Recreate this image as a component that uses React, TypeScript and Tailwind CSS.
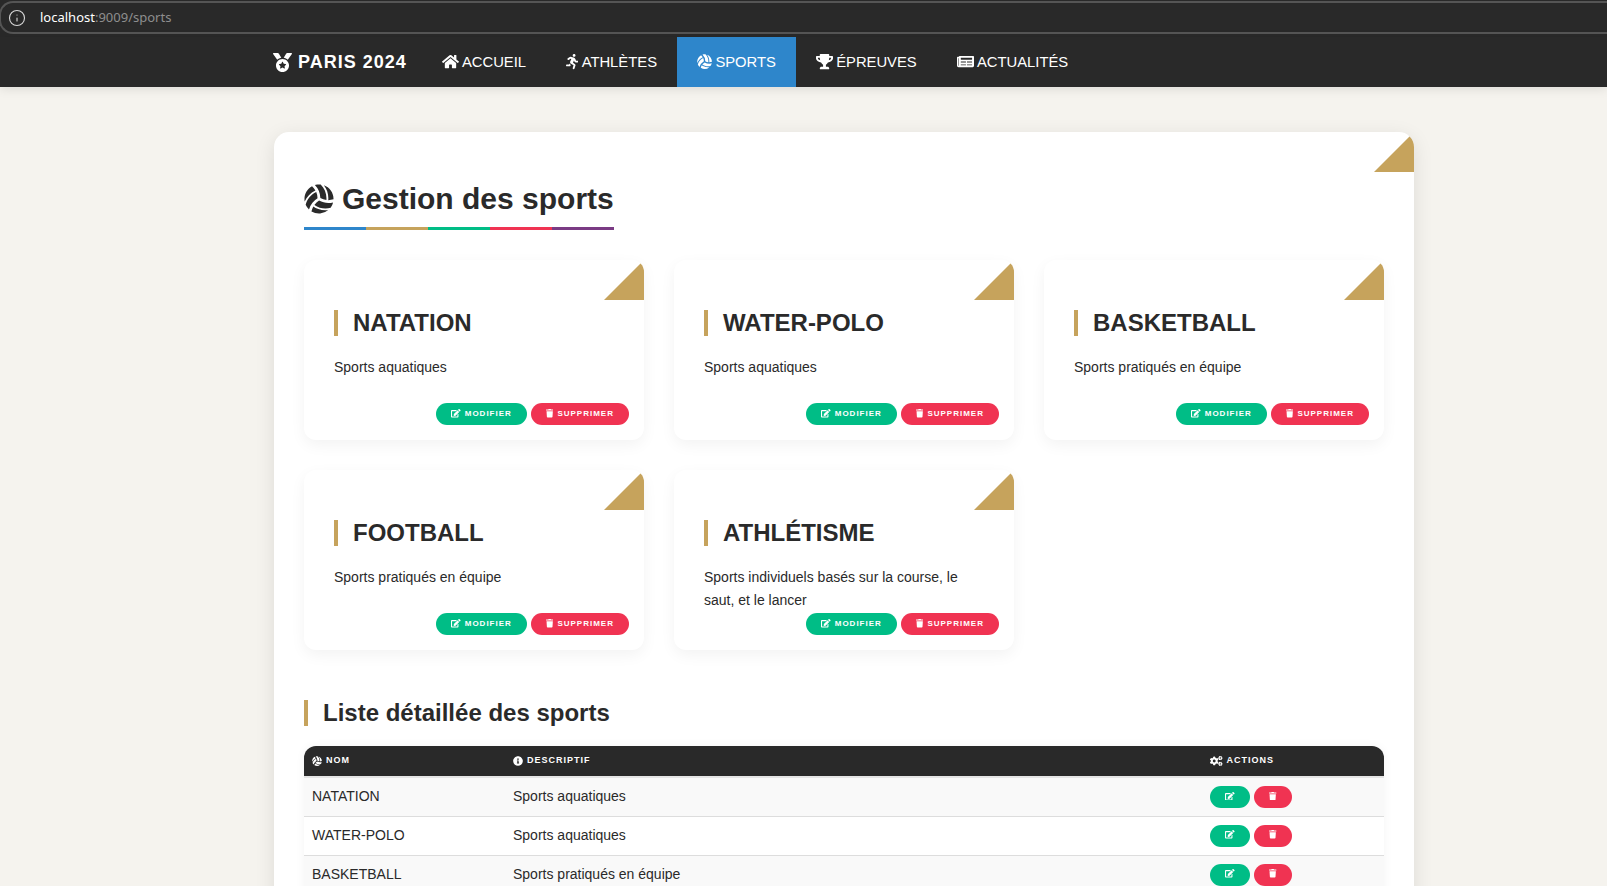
import { Info } from 'lucide-react'
import {
  FaCogs,
  FaEdit,
  FaHome,
  FaInfoCircle,
  FaMedal,
  FaNewspaper,
  FaRunning,
  FaTrash,
  FaTrophy,
  FaVolleyballBall,
} from 'react-icons/fa'

// react-icons draws in a 1em square, so wide glyphs get their real width here
const navItems = [
  { label: 'Accueil', icon: FaHome, iconClass: 'w-[17px]' },
  { label: 'Athlètes', icon: FaRunning, iconClass: 'w-[12.4px]' },
  { label: 'Sports', icon: FaVolleyballBall, iconClass: 'w-[15.2px]', active: true },
  { label: 'Épreuves', icon: FaTrophy, iconClass: 'w-[17px]' },
  { label: 'Actualités', icon: FaNewspaper, iconClass: 'w-[17px]' },
]

const sports = [
  { name: 'Natation', description: 'Sports aquatiques' },
  { name: 'Water-polo', description: 'Sports aquatiques' },
  { name: 'Basketball', description: 'Sports pratiqués en équipe' },
  { name: 'Football', description: 'Sports pratiqués en équipe' },
  { name: 'Athlétisme', description: 'Sports individuels basés sur la course, le saut, et le lancer' },
]

const ruleColours = ['bg-[#2e86cb]', 'bg-[#c6a35c]', 'bg-[#00bd86]', 'bg-[#f03352]', 'bg-[#7a3b84]']

function Corner() {
  return <div className="absolute right-0 top-0 h-10 w-10 bg-[#c6a35c] [clip-path:polygon(100%_0,100%_100%,0_100%)]" />
}

function SportCard({ name, description }: { name: string; description: string }) {
  return (
    <div className="relative flex h-[180px] flex-col overflow-hidden rounded-[12px] bg-white pb-[15px] pl-[30px] pr-[15px] pt-[50px] shadow-[0_5px_15px_rgba(0,0,0,0.05)]">
      <Corner />
      <h3 className="border-l-4 border-[#c6a35c] pl-[15px] text-[24px] font-bold uppercase leading-[26px] text-[#2a2a2a]">
        {name}
      </h3>
      <p className="mt-5 pr-[15px] text-[14px] leading-[23px] text-[#2a2a2a]">{description}</p>
      <div className="mt-auto flex justify-end gap-1">
        <button className="flex h-[22px] w-[91px] items-center justify-center gap-[4px] rounded-full bg-[#00bd86] text-[8px] font-bold uppercase tracking-[1px] text-white">
          <FaEdit className="mb-px h-[8.5px] w-[9.6px]" />
          Modifier
        </button>
        <button className="flex h-[22px] w-[98px] items-center justify-center gap-[4px] rounded-full bg-[#f03352] text-[8px] font-bold uppercase tracking-[1px] text-white">
          <FaTrash className="mb-px h-[8.5px] w-[7.4px]" />
          Supprimer
        </button>
      </div>
    </div>
  )
}

function HeaderCell({ icon: Icon, iconClass, label }: { icon: typeof FaCogs; iconClass: string; label: string }) {
  return (
    <th className="px-2 text-left align-middle text-[9px] font-bold uppercase tracking-[1px] text-white">
      <span className="flex items-center gap-[4px]">
        <Icon className={`h-[10px] ${iconClass}`} />
        {label}
      </span>
    </th>
  )
}

export default function App() {
  return (
    <div className="h-[886px] w-[1607px] overflow-hidden bg-[#f5f3ee] font-['Liberation_Sans',Arial,sans-serif] text-[#2a2a2a]">
      <div className="h-[37px] bg-[#292929] pt-px">
        <div className="-ml-px flex h-[33px] items-center rounded-l-[14px] border-y-2 border-l-2 border-[#555555] pl-[7px]">
          <Info className="h-[18px] w-[18px] text-[#d8d8d8]" strokeWidth={1.5} />
          <span className="ml-[14px] font-['Noto_Sans',sans-serif] text-[13px] text-[#8e8e8e]">
            <span className="text-white">localhost</span>:9009/sports
          </span>
        </div>
      </div>

      <nav className="relative z-10 flex h-[50px] bg-[#292929] pl-[273px] text-[14.8px] text-white shadow-[0_2px_10px_rgba(0,0,0,0.1)]">
        <a className="mr-[15px] flex items-center gap-[6px] text-[18px] font-bold tracking-[1px]">
          <FaMedal className="text-[19px]" />
          PARIS 2024
        </a>
        {navItems.map(({ label, icon: Icon, iconClass, active }) => (
          <a
            key={label}
            className={`flex items-center gap-[3.2px] px-5 uppercase ${active ? 'bg-[#2e86cb]' : ''}`}
          >
            <Icon className={`h-[15.2px] ${iconClass}`} />
            {label}
          </a>
        ))}
      </nav>

      <main className="relative ml-[274px] mt-[45px] w-[1140px] overflow-hidden rounded-t-[15px] bg-white p-[30px] shadow-[0_5px_20px_rgba(0,0,0,0.1)]">
        <Corner />
        <h1 className="mt-[13px] flex h-12 items-center gap-2 text-[30px] font-bold leading-[48px] text-[#2a2a2a]">
          <FaVolleyballBall className="text-[30px]" />
          Gestion des sports
        </h1>
        <div className="mt-1 flex h-[3px] w-[310px]">
          {ruleColours.map((colour) => (
            <div key={colour} className={`flex-1 ${colour}`} />
          ))}
        </div>

        <div className="mt-[30px] grid grid-cols-3 gap-[30px]">
          {sports.map((sport) => (
            <SportCard key={sport.name} {...sport} />
          ))}
        </div>

        <h2 className="mt-[50px] border-l-4 border-[#c6a35c] pl-[15px] text-[24px] font-bold leading-[26px] text-[#2a2a2a]">
          Liste détaillée des sports
        </h2>

        <div className="mt-5 overflow-hidden rounded-t-[12px] shadow-[0_0_10px_rgba(0,0,0,0.05)]">
          <table className="w-full table-fixed border-collapse text-[14px]">
            <colgroup>
              <col className="w-[201px]" />
              <col className="w-[697px]" />
              <col className="w-[182px]" />
            </colgroup>
            <thead>
              <tr className="h-[31px] border-b-2 border-[#e5e5e5] bg-[#292929]">
                <HeaderCell icon={FaVolleyballBall} iconClass="w-[10px]" label="Nom" />
                <HeaderCell icon={FaInfoCircle} iconClass="w-[10px]" label="Descriptif" />
                <HeaderCell icon={FaCogs} iconClass="w-[12.5px]" label="Actions" />
              </tr>
            </thead>
            <tbody>
              {sports.map((sport, index) => (
                <tr
                  key={sport.name}
                  className={`h-[39px] border-b border-[#dddddd] ${index % 2 === 0 ? 'bg-[#f9f9f9]' : 'bg-white'}`}
                >
                  <td className="px-2 uppercase">{sport.name}</td>
                  <td className="px-2">{sport.description}</td>
                  <td className="px-2">
                    <div className="flex gap-1">
                      <button className="flex h-[22px] w-10 items-center justify-center rounded-full bg-[#00bd86] text-white">
                        <FaEdit className="mb-[2px] h-[8.5px] w-[9.6px]" />
                      </button>
                      <button className="flex h-[22px] w-[38px] items-center justify-center rounded-full bg-[#f03352] text-white">
                        <FaTrash className="mb-[2px] h-[8.5px] w-[7.4px]" />
                      </button>
                    </div>
                  </td>
                </tr>
              ))}
            </tbody>
          </table>
        </div>
      </main>
    </div>
  )
}
